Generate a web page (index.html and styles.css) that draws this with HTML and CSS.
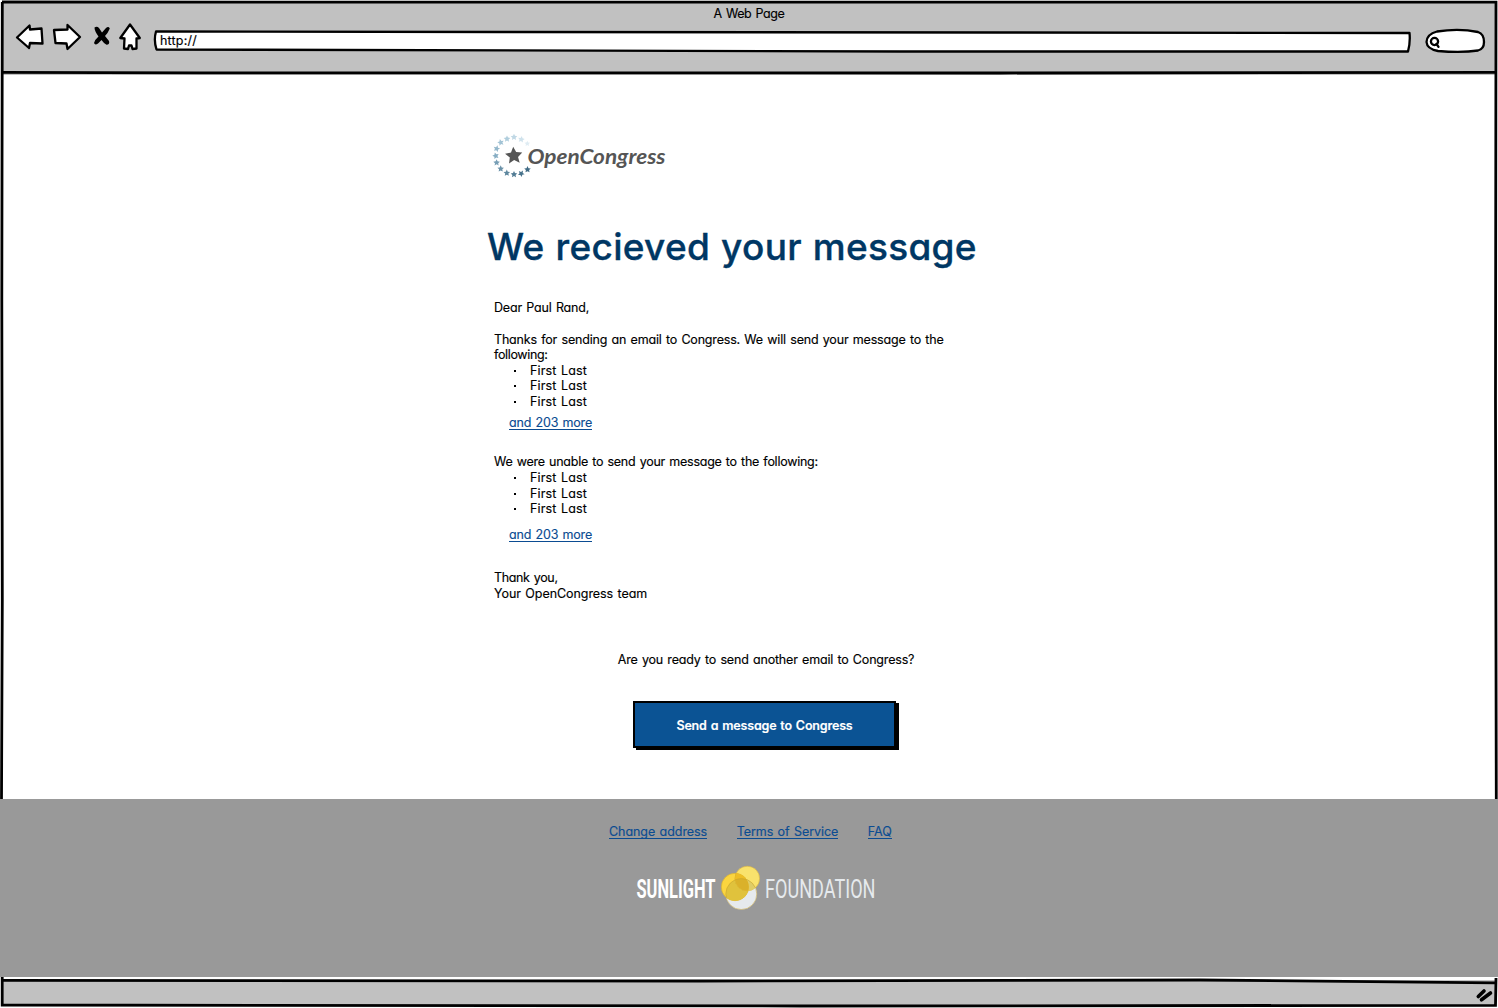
FILE: index.html
```html
<!DOCTYPE html>
<html lang="en">
<head>
<meta charset="utf-8">
<title>A Web Page</title>
<link rel="stylesheet" href="styles.css">
</head>
<body>
<div class="window">
  <header class="chrome">
    <div class="chrome-title">A Web Page</div>
    <div class="toolbar">
      <svg class="nav-icons" width="138" height="40" viewBox="10 18 138 40" aria-hidden="true">
        <g class="ink">
          <path d="M17 37.500 L29.500 25.500 L30 29.500 L41.500 28.500 L42.500 43.500 L30 43 L29 48 Z"/>
          <path d="M54 30 L67.500 29.500 L67.500 25 L80 37 L67.500 49 L66.500 43.500 L55.500 43 Z"/>
          <path d="M130 24.500 L139.800 38 L136.500 38.500 L136.500 48.500 L132.500 49 L131.500 45.500 L129 45.500 L128 49 L124 48.500 L124.500 38.500 L120.300 38 Z"/>
        </g>
        <path class="scribble" d="M94.500 27.500 Q97 25.800 99 28 L102 32.500 L106 28 Q108.500 26 109.800 28.500 Q108 33 105 36 L109 41 Q110 44.500 106.500 44.800 Q103.500 43 101.500 40 L98 43.500 Q95 45.500 94 43 Q95 39.500 98.500 36.500 Q94.500 31 94.500 27.500 Z"/>
      </svg>
      <div class="address">
        <svg class="outline" width="1260" height="26" viewBox="152 29 1260 26" aria-hidden="true">
          <path class="ink" d="M156 31.500 L500 32 L1000 32.500 L1409.500 33 Q1410.500 42 1408 51.500 L900 51.500 L156.500 49.500 Q153.500 40 156 31.500 Z"/>
        </svg>
        <span class="address-text">http://</span>
      </div>
      <svg class="search" width="62" height="28" viewBox="1424 28 62 28" aria-hidden="true">
        <path class="ink" d="M1437 31.500 Q1459 28 1478 32 Q1484 34 1484 42 Q1484 49 1478 50.500 Q1462 53 1438 51 Q1427 49 1426.500 42 Q1427 34 1437 31.500 Z"/>
        <circle class="ink" cx="1434.500" cy="41.500" r="3.600"/>
        <path class="ink" d="M1436.500 44 L1438.500 46.800"/>
      </svg>
    </div>
  </header>

  <main class="page">
    <div class="letter">
      <svg class="logo" width="184" height="50" viewBox="485 130 184 50" role="img" aria-label="OpenCongress">
        <defs><path id="star" d="M0 -1 L.3 -.35 L1 -.25 L.48 .22 L.62 .9 L0 .56 L-.62 .9 L-.48 .22 L-1 -.25 L-.3 -.35 Z"/></defs>
        <use href="#star" transform="translate(527.3 143.500) scale(2.8)" fill="#dfecf3"/>
        <use href="#star" transform="translate(521.3 139.200) rotate(10) scale(3.3)" fill="#cfe2ec"/>
        <use href="#star" transform="translate(514 137) scale(3.3)" fill="#c0d8e5"/>
        <use href="#star" transform="translate(507 138.700) scale(3.3)" fill="#b0cedd"/>
        <use href="#star" transform="translate(500.700 142.300) rotate(-15) scale(3.3)" fill="#a2c3d5"/>
        <use href="#star" transform="translate(496.700 148.500) rotate(15) scale(3.3)" fill="#94b8cc"/>
        <use href="#star" transform="translate(495.700 155.600) rotate(-15) scale(3.3)" fill="#86adc3"/>
        <use href="#star" transform="translate(496.600 162.500) scale(3.3)" fill="#789fb6"/>
        <use href="#star" transform="translate(500.700 168.600) scale(3.3)" fill="#6b92a9"/>
        <use href="#star" transform="translate(506.800 172.800) scale(3.3)" fill="#5f889f"/>
        <use href="#star" transform="translate(514 174.200) scale(3.3)" fill="#537d95"/>
        <use href="#star" transform="translate(521.300 173.400) rotate(30) scale(3.3)" fill="#48738c"/>
        <use href="#star" transform="translate(527.500 169.300) scale(3.3)" fill="#3f6a84"/>
        <use href="#star" transform="translate(513.800 155.300) rotate(-4) scale(8.600)" fill="#555"/>
        <text class="logo-text" x="527.500" y="163.500" textLength="138" lengthAdjust="spacingAndGlyphs">OpenCongress</text>
      </svg>

      <h1>We recieved your message</h1>

      <p class="greeting">Dear Paul Rand,</p>
      <p class="sent">Thanks for sending an email to Congress. We will send your message to the<br><span class="tight">following:</span></p>
      <ul>
        <li>First Last</li>
        <li>First Last</li>
        <li>First Last</li>
      </ul>
      <a class="more more-sent" href="#">and 203 more</a>

      <p class="unsent">We were unable to send your message to the following:</p>
      <ul>
        <li>First Last</li>
        <li>First Last</li>
        <li>First Last</li>
      </ul>
      <a class="more more-unsent" href="#">and 203 more</a>

      <p class="signoff"><span class="tight">Thank you,</span><br><span class="loose">Your OpenCongress team</span></p>
    </div>

    <div class="again">
      <p class="ready">Are you ready to send another email to Congress?</p>
      <a class="button" href="#">Send a message to Congress</a>
    </div>
  </main>

  <footer class="footer">
    <nav class="links">
      <a class="loose" href="#">Change address</a>
      <a class="loose" href="#">Terms of Service</a>
      <a class="loose" href="#">FAQ</a>
    </nav>
    <svg class="sunlight" width="242" height="48" viewBox="635 864 242 48" role="img" aria-label="Sunlight Foundation">
      <text class="sun-bold" x="636.500" y="898" textLength="79" lengthAdjust="spacingAndGlyphs">SUNLIGHT</text>
      <circle cx="741.300" cy="894" r="15.500" fill="#e6eaed" stroke="#d5b75a" stroke-width=".6"/>
      <circle cx="747.300" cy="878.500" r="12.300" fill="#f9e26c" stroke="#dcb640" stroke-width=".6"/>
      <circle cx="735" cy="887" r="13.700" fill="#fbd53f" stroke="#d5ac2e" stroke-width=".6"/>
      <clipPath id="left"><circle cx="735" cy="887" r="13.700"/></clipPath>
      <clipPath id="top"><circle cx="747.300" cy="878.500" r="12.300"/></clipPath>
      <g clip-path="url(#left)">
        <circle cx="741.300" cy="894" r="15.500" fill="#e0c23c" stroke="#c9a52f" stroke-width=".6"/>
        <circle cx="747.300" cy="878.500" r="12.300" fill="#edbd25" stroke="#c9a52f" stroke-width=".6"/>
      </g>
      <g clip-path="url(#top)">
        <circle cx="741.300" cy="894" r="15.500" fill="#dfcd68" stroke="#c9a52f" stroke-width=".6"/>
        <g clip-path="url(#left)">
          <circle cx="747.300" cy="878.500" r="12.300" fill="#edbd25"/>
          <circle cx="741.300" cy="894" r="15.500" fill="#dab12a" stroke="#c9a52f" stroke-width=".6"/>
        </g>
      </g>
      <text class="sun-light" x="765" y="898" textLength="110.500" lengthAdjust="spacingAndGlyphs">FOUNDATION</text>
    </svg>
  </footer>
  <div class="statusbar"></div>

  <svg class="frame" width="1498" height="1008" viewBox="0 0 1498 1008" aria-hidden="true">
    <path d="M2 2 L1496 2.200 L1495.500 400 L1496.300 799 M2.300 2 L1.800 300 L2.300 600 L1.500 799"/>
    <path d="M2 72.300 L200 72.800 L1000 73 L1495 72.300"/>
    <path d="M2.200 977 L2.200 1005 L800 1006 L1495.500 1005.300 L1496 978"/>
    <path d="M2 980.300 L700 981 L1200 980 L1495 982.800"/>
    <path class="grip" d="M1478.300 996.500 L1484 991 M1481.500 999.800 L1490.500 993"/>
  </svg>
</div>
</body>
</html>
```
FILE: styles.css
```css
* { box-sizing: border-box; }

body {
  margin: 0;
  background: #fff;
  color: #000;
  font: 12.5px/15.6px Inter, "Noto Sans", sans-serif;
  font-feature-settings: "cv11" 1;
  letter-spacing: -0.18px;
  word-spacing: 1px;
  -webkit-text-stroke: 0.15px currentColor;
}

h1, p, ul { margin: 0; padding: 0; font-weight: inherit; }

.tight { letter-spacing: -0.35px; }
.loose { letter-spacing: -0.06px; }

.window {
  position: relative;
  display: flex;
  flex-direction: column;
  width: 1498px;
  height: 1008px;
  overflow: hidden;
}

.chrome {
  height: 73px;
  margin: 2px 2px 0;
  margin-bottom: -2px;
  background: #c1c1c1;
}

.chrome-title {
  padding-top: 4px;
  height: 16px;
  text-align: center;
  letter-spacing: -0.4px;
}

.toolbar { display: flex; padding-left: 8px; }
.nav-icons { flex: none; }
.address { position: relative; width: 1260px; height: 26px; margin: 11px 0 0 4px; }
.outline { display: block; }
.address-text { position: absolute; left: 8px; top: 4px; letter-spacing: 0.2px; }
.search { margin: 10px 0 0 12px; }

.ink { fill: #fff; stroke: #000; stroke-width: 2.3; stroke-linejoin: round; stroke-linecap: round; }
.scribble { fill: #000; }

.page { flex: none; height: 726px; padding-top: 57px; }

.letter { width: 500px; margin-left: 485px; padding-left: 9px; }
.logo { display: block; margin-left: -9px; }
.logo-text {
  font: italic 700 21px Lato, sans-serif;
  fill: #555;
  letter-spacing: 0;
  -webkit-text-stroke: 0;
}

h1 {
  margin: 42px 0 0 -7px;
  height: 50px;
  color: #003764;
  font-size: 37px;
  font-weight: 500;
  line-height: 50px;
  letter-spacing: 0.3px;
  word-spacing: 0.8px;
  white-space: nowrap;
  -webkit-text-stroke: 0.35px currentColor;
}

.greeting { margin-top: 28px; }
.sent { margin-top: 16px; white-space: nowrap; }
ul { list-style: none; }
li { position: relative; padding-left: 36px; letter-spacing: 0.13px; }
li::before {
  content: "";
  position: absolute;
  left: 20px;
  top: 7px;
  width: 2px;
  height: 2px;
  background: #000;
}

a { color: #0b4c92; text-decoration: none; }
.more, .links a { width: max-content; height: 15px; line-height: 15px; border-bottom: 1px solid #0b4c92; }
.more { display: block; margin-left: 15px; }
.more-sent { margin-top: 5px; }
.unsent { margin-top: 24px; letter-spacing: -0.25px; }
.unsent + ul { padding-top: 1px; }
.more-unsent { margin-top: 10px; }
.signoff { margin-top: 28px; }

.again { display: flex; flex-direction: column; align-items: center; width: 266px; margin: 51px 0 0 633px; }
.ready { white-space: nowrap; }
.button {
  display: flex;
  align-items: center;
  justify-content: center;
  width: 263px;
  height: 47px;
  margin: 33px 3px 0 0;
  padding-top: 3px;
  border: 2px solid #000;
  background: #0b5394;
  box-shadow: 3px 2px 0 #000;
  color: #fff;
  font-weight: 600;
}

.footer { position: relative; z-index: 1; flex: none; height: 178px; background: #999; }
.links { display: flex; gap: 29.5px; padding: 25px 0 0 609px; }
.sunlight { display: block; margin: 25px 0 0 635px; overflow: visible; letter-spacing: 0; -webkit-text-stroke: 0; }
.sun-bold { font: 700 26.7px Roboto, sans-serif; fill: #fff; }
.sun-light { font: 400 26.7px Roboto, sans-serif; fill: #e6eaed; }

.statusbar { height: 26px; margin: 3px 2px 0; background: #c1c1c1; }

.frame { position: absolute; inset: 0; fill: none; stroke: #000; stroke-width: 2.8; }
.frame .grip { stroke-width: 3.6; stroke-linecap: round; }
```
